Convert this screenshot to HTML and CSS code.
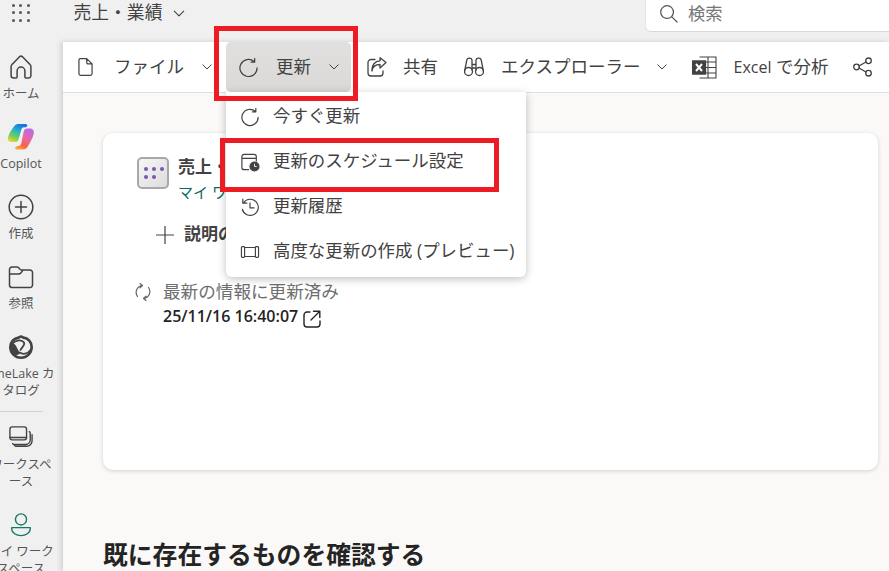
FILE: index.html
```html
<!DOCTYPE html>
<html lang="ja">
<head>
<meta charset="utf-8">
<title>売上・業績</title>
<link rel="stylesheet" href="styles.css">
</head>
<body>
<div class="app">
  <header class="topbar">
    <div class="waffle">
      <i></i><i></i><i></i><i></i><i></i><i></i><i></i><i></i><i></i>
    </div>
    <div class="crumb">売上・業績</div>
    <svg class="chev-top" viewBox="0 0 14 8"><path d="M1.500 1.200 7 6.700l5.500-5.500"/></svg>
    <div class="search">
      <svg class="search-icon" viewBox="0 0 20 20"><circle cx="8.500" cy="8.500" r="6.700"/><path d="m13.500 13.500 5.500 5.500"/></svg>
      <span>検索</span>
    </div>
  </header>

  <nav class="sidebar">
    <div class="nav-list">
      <div class="nav-item">
        <svg class="ic" viewBox="0 0 24 24"><path d="M3 9.500 10.500 1.800a2.200 2.200 0 0 1 3 0L21 9.500a2.800 2.800 0 0 1 .9 2v9a2.500 2.500 0 0 1-2.500 2.500h-2.500a1 1 0 0 1-1-1v-6a3.900 3.900 0 0 0-7.800 0v6a1 1 0 0 1-1 1H4.600a2.500 2.500 0 0 1-2.500-2.500v-9a2.800 2.800 0 0 1 .9-2Z"/></svg>
        <span>ホーム</span>
      </div>
      <div class="nav-item">
        <svg class="ic copilot" viewBox="0 0 28 28">
          <defs>
            <linearGradient id="cpa" x1="0.700" y1="0" x2="0.200" y2="1"><stop offset="0" stop-color="#1b6fe0"/><stop offset="0.400" stop-color="#25b5c9"/><stop offset="0.750" stop-color="#7fd14a"/><stop offset="1" stop-color="#f2d33a"/></linearGradient>
            <linearGradient id="cpb" x1="0.800" y1="0" x2="0.300" y2="1"><stop offset="0" stop-color="#b66bea"/><stop offset="0.450" stop-color="#e867a8"/><stop offset="0.800" stop-color="#f6653f"/><stop offset="1" stop-color="#f8a03a"/></linearGradient>
          </defs>
          <path fill="url(#cpa)" d="M11 1h7.500c1.500 0 2.200 1 1.600 2.400L18 4.500c-2-.5-3.200.5-3.700 2.200l-2.600 9c-.5 2-1.500 3.300-3 3.300H4.500C1.500 19 .5 16.800 1 14.500 2 10 4.500 7 7 3.500 8 2 9.200 1 11 1Z"/>
          <path fill="url(#cpb)" d="M20 5.500h3c3 0 4.300 2.500 3.800 5-1 4.500-3 8-5.800 12.500-1.200 2-2.500 3.500-5 3.500H10c-1.500 0-2.200-1.200-1.500-2.500L10.500 23c1.800.3 3.200-.5 3.800-2.400l2.200-11.100C17 7 18 5.500 20 5.500Z"/>
        </svg>
        <span>Copilot</span>
      </div>
      <div class="nav-item">
        <svg class="ic" viewBox="0 0 24 24"><circle cx="12" cy="12" r="11.800"/><path d="M12 6.500v11M6.500 12h11"/></svg>
        <span>作成</span>
      </div>
      <div class="nav-item">
        <svg class="ic" viewBox="0 0 24 24"><path d="M.5 4.500A2.500 2.500 0 0 1 3 2h5a2 2 0 0 1 1.400.6l1.800 1.900c.4.400.9.600 1.400.6H21a2.500 2.500 0 0 1 2.500 2.500V20a2.500 2.500 0 0 1-2.500 2.500H3A2.500 2.500 0 0 1 .5 20ZM.5 9h9.500c.8 0 1.300-.3 1.800-.9l2.200-3"/></svg>
        <span>参照</span>
      </div>
      <div class="nav-item">
        <svg class="ic lake" viewBox="0 0 24 24">
          <path class="lake-ring" d="M12 1.500c1 0 1.600.8 2.400 1.100C19 3 22.700 7 22.700 12A10.700 10.700 0 1 1 1.300 12C1.300 7 5 3.300 9.600 2.600c.8-.3 1.400-1.100 2.400-1.100Z"/>
          <path class="lake-solid" d="M1.500 9c3-1.200 4.500 0 5.500 2l4 7.500c-3 2.500-7 2.500-9-1C.5 15 .5 11.500 1.500 9Z"/>
          <path class="lake-curve" d="M3 9c4-4.500 10-4.500 12-1.500 1.500 2.500-2.500 5-3.500 7.500M10.500 17.500c3 2 8 2 11-2.500"/>
        </svg>
        <span>OneLake カタログ</span>
      </div>
      <div class="nav-rule"></div>
      <div class="nav-item">
        <svg class="ic" viewBox="0 0 26 26"><rect x="1" y="1" width="18" height="14" rx="2.500"/><path d="M1 12.500h18M22 6a2 2 0 0 1 1 2v7a5 5 0 0 1-5 5H6a2 2 0 0 1-2-1M25 9.500v6.500a6 6 0 0 1-6 6H8a2 2 0 0 1-2-1"/></svg>
        <span>ワークスペース</span>
      </div>
      <div class="nav-item">
        <svg class="ic teal" viewBox="0 0 24 26"><circle cx="12" cy="7" r="6"/><path d="M2 15.800h20v1.700c0 4-5 7-10 7s-10-3-10-7Z"/></svg>
        <span>マイ ワークスペース</span>
      </div>
    </div>
  </nav>

  <main class="main">
    <div class="toolbar">
      <div class="tb-item tb-file">
        <svg class="tb-ic doc" viewBox="0 0 16 20"><path d="M2.500 1h6.800L15 6.700V17a2 2 0 0 1-2 2H3a2 2 0 0 1-2-2V2.500A1.500 1.500 0 0 1 2.500 1ZM9.300 1v4.200a1.500 1.500 0 0 0 1.500 1.500H15"/></svg>
        <span>ファイル</span>
        <svg class="chev" viewBox="0 0 10 6"><path d="m.8.800 4.200 4.200L9.200.8"/></svg>
      </div>
      <div class="tb-item tb-refresh">
        <svg class="tb-ic refresh" viewBox="0 0 20 20"><path d="M19 10.500A9 9 0 1 1 15.800 3.600M16.500.5v3.800h-3.800"/></svg>
        <span>更新</span>
        <svg class="chev" viewBox="0 0 10 6"><path d="m.8.800 4.200 4.200L9.200.8"/></svg>
      </div>
      <div class="tb-item tb-share">
        <svg class="tb-ic share" viewBox="0 0 20 20"><path d="M8 2.500H4a3 3 0 0 0-3 3V16a3 3 0 0 0 3 3h9a3 3 0 0 0 3-3v-2M5 14c.5-4 3.500-6.500 8-6.500V11l6-5.500L13 .8v3C8 4 4.500 8 5 14Z"/></svg>
        <span>共有</span>
      </div>
      <div class="tb-item tb-explore">
        <svg class="tb-ic binoc" viewBox="0 0 20 20"><circle cx="4.500" cy="14.500" r="4"/><circle cx="15.500" cy="14.500" r="4"/><path d="M.5 14.500 2.800 3C3.300.5 7.500.5 8 3v10M19.500 14.500 17.200 3C16.700.5 12.500.5 12 3v10M8 7.500h4M8 11h4"/></svg>
        <span>エクスプローラー</span>
        <svg class="chev" viewBox="0 0 10 6"><path d="m.8.800 4.200 4.200L9.200.8"/></svg>
      </div>
      <div class="tb-item tb-excel">
        <svg class="tb-ic excel" viewBox="0 0 25 23">
          <path class="xl-grid" d="M8 1h16v21H8M16 1v21M8 6h16M8 11.500h16M8 17h16"/>
          <rect class="xl-box" x="0.500" y="5" width="13" height="13"/>
          <path class="xl-x" d="m4 8 6 7M10 8l-6 7"/>
        </svg>
        <span><span class="latin">Excel</span> で分析</span>
      </div>
      <div class="tb-item tb-nodes">
        <svg class="tb-ic nodes" viewBox="0 0 20 20"><circle cx="3.500" cy="10" r="2.800"/><circle cx="15.500" cy="3.800" r="2.800"/><circle cx="15.500" cy="16.200" r="2.800"/><path d="M6 9 13 5M6 11l7 4"/></svg>
      </div>
    </div>

    <div class="content">
      <section class="card">
        <div class="card-head">
          <div class="tile"><i></i><i></i><i></i><i></i><i></i></div>
          <div class="card-title">
            <div class="name">売上・業績</div>
            <div class="where">マイ ワークスペース</div>
          </div>
        </div>
        <div class="add-desc">
          <svg class="plus" viewBox="0 0 18 18"><path d="M9 0v18M0 9h18"/></svg>
          <span>説明の追加</span>
        </div>
        <div class="status">
          <svg class="sync" viewBox="0 0 16 18"><path d="M2.500 13.500A7 7 0 0 1 7 2.500M5 .5l2.500 2L5 4.800M13.500 4.500A7 7 0 0 1 9 15.500M11 13.200l-2.500 2.300L11 17.500"/></svg>
          <div>
            <div class="status-label">最新の情報に更新済み</div>
            <div class="status-time">25/11/16 16:40:07
              <svg class="ext" viewBox="0 0 18 18"><path d="M7 2H4a3 3 0 0 0-3 3v9a3 3 0 0 0 3 3h10a3 3 0 0 0 3-3v-3M10.500 1.200h6.300v6.300M16.500 1.500 8 10"/></svg>
            </div>
          </div>
        </div>
      </section>
      <h2 class="section-title">既に存在するものを確認する</h2>
    </div>
  </main>

  <div class="menu">
    <div class="menu-item">
      <svg class="m-ic" viewBox="0 0 20 20"><path d="M19 10.500A9 9 0 1 1 15.800 3.600M16.500.5v3.800h-3.800"/></svg>
      <span>今すぐ更新</span>
    </div>
    <div class="menu-item">
      <svg class="m-ic" viewBox="0 0 20 20"><path d="M8.500 18.500H3.500a2.500 2.500 0 0 1-2.500-2.500V4a2.500 2.500 0 0 1 2.500-2.500h11A2.500 2.500 0 0 1 17 4v5M1 6h16"/><circle class="m-solid" cx="15" cy="15" r="5"/><path class="m-hand" d="M15 12.500V15h2"/></svg>
      <span>更新のスケジュール設定</span>
    </div>
    <div class="menu-item">
      <svg class="m-ic" viewBox="0 0 20 20"><path d="M1.500 12.500A9 9 0 1 0 3 5M2 1.200v4.500h4.500M10 5.500V11h4.500"/></svg>
      <span>更新履歴</span>
    </div>
    <div class="menu-item">
      <svg class="m-ic wide" viewBox="0 0 20 20"><path d="M4 5h12M4 15h12M4 5v10a1 1 0 0 1-1 1H1.500a1 1 0 0 1-1-1V5a1 1 0 0 1 1-1H3a1 1 0 0 1 1 1ZM16 5v10a1 1 0 0 0 1 1h1.500a1 1 0 0 0 1-1V5a1 1 0 0 0-1-1H17a1 1 0 0 0-1 1Z"/></svg>
      <span>高度な更新の作成 (プレビュー)</span>
    </div>
  </div>

  <div class="mark mark-button"></div>
  <div class="mark mark-item"></div>
</div>
</body>
</html>
```

FILE: styles.css
```css
* { box-sizing: border-box; }

html, body {
  margin: 0;
  height: 100%;
  overflow: hidden;
}

body {
  font-family: "Open Sans", "Noto Sans CJK JP", sans-serif;
  color: #424242;
  background: #f0f0f0;
}

svg {
  display: block;
  flex: none;
  fill: none;
  stroke: #424242;
  stroke-width: 1.300;
  stroke-linecap: round;
  stroke-linejoin: round;
}

.app {
  position: relative;
  display: grid;
  grid-template-columns: 63px 1fr;
  grid-template-rows: 42px 1fr;
  width: 889px;
  height: 571px;
  overflow: hidden;
}

/* top bar */
.topbar {
  grid-column: 1 / 3;
  display: flex;
  align-items: flex-start;
  background: #f0f0f0;
}

.waffle {
  display: grid;
  grid-template-columns: repeat(3, 3px);
  grid-auto-rows: 3px;
  gap: 4.500px;
  margin: 3.500px 0 0 11.500px;
}

.waffle i {
  background: #555;
  border-radius: 50%;
}

.crumb {
  margin-left: 44px;
  font-size: 17.800px;
  line-height: 24px;
}

.chev-top {
  width: 12px;
  height: 7px;
  margin: 10px 0 0 11px;
}

.search {
  display: flex;
  align-items: center;
  width: 243px;
  height: 32px;
  margin-left: auto;
  padding: 0 0 6px 13px;
  background: #fff;
  border-bottom: 1px solid #d8d8d8;
  border-radius: 0 0 0 5px;
  box-shadow: -1px 0 0 #e6e6e6;
  color: #777;
  font-size: 17.300px;
}

.search-icon {
  width: 19px;
  height: 19px;
  margin: 2px 10px 0 0;
  stroke: #555;
}

/* sidebar */
.sidebar {
  overflow: hidden;
  background: #f0f0f0;
}

.nav-list {
  width: 68px;
  margin: 13px 0 0 -13px;
}

.nav-item {
  display: flex;
  flex-direction: column;
  align-items: center;
  margin-bottom: 23px;
  font-size: 12.500px;
  line-height: 17px;
  text-align: center;
  color: #555;
}

.ic {
  width: 24px;
  height: 24px;
  margin-bottom: 6px;
  stroke-width: 1.500;
  overflow: visible;
}

.copilot {
  width: 28px;
  height: 28px;
  margin: -2px 0 4px;
  stroke: none;
}

.lake-ring {
  stroke-width: 2.600;
}

.lake-solid {
  fill: #424242;
  stroke: none;
}

.lake-curve {
  stroke-width: 1.800;
}

.teal {
  stroke: #117865;
}

.nav-rule {
  width: 43px;
  height: 1px;
  margin: -11px 0 14px 13px;
  background: #d4d4d4;
}

/* main */
.main {
  position: relative;
  display: flex;
  flex-direction: column;
  min-width: 0;
  background: #faf9f8;
  box-shadow: -2px 0 5px rgba(0, 0, 0, 0.14);
}

.toolbar {
  display: flex;
  align-items: center;
  flex: none;
  height: 51px;
  background: #fff;
  border-bottom: 1px solid #e0e0e0;
  font-size: 17.500px;
}

.tb-item {
  display: flex;
  align-items: center;
  height: 50px;
  white-space: nowrap;
}

.tb-item > span {
  padding-bottom: 4px;
}

.latin {
  font-size: 16px;
}

.tb-ic {
  width: 20px;
  height: 20px;
}

.chev {
  width: 10px;
  height: 6px;
  stroke-width: 1;
}

.tb-file {
  width: 163px;
  padding-left: 15px;
}

.doc {
  width: 15px;
  margin-right: 21px;
}

.tb-file .chev {
  margin-left: 18px;
}

.tb-refresh {
  width: 125px;
  padding-left: 13px;
  background: linear-gradient(#e2e0de, #dbd9d7);
  border-radius: 5px;
}

.refresh {
  width: 19px;
  height: 19px;
  margin-right: 18px;
}

.tb-refresh .chev {
  margin-left: 18px;
}

.tb-share {
  margin-left: 16px;
}

.share {
  margin-right: 16px;
}

.tb-explore {
  margin-left: 26px;
}

.binoc {
  margin-right: 17px;
}

.tb-explore .chev {
  margin-left: 17px;
}

.tb-excel {
  margin-left: 25px;
}

.excel {
  width: 25px;
  height: 23px;
  margin-right: 16px;
}

.xl-grid {
  stroke-width: 1.100;
}

.xl-box {
  fill: #424242;
  stroke: #424242;
}

.xl-x {
  stroke: #fff;
  stroke-width: 2;
  stroke-linecap: butt;
}

.tb-nodes {
  margin-left: 25px;
}

.nodes {
  width: 20px;
  height: 20px;
}

/* content */
.content {
  flex: 1;
  padding: 40px 11px 0 40px;
}

.card {
  height: 337px;
  padding: 24px 34px;
  background: #fff;
  border-radius: 10px;
  box-shadow: 0 1px 4px rgba(0, 0, 0, 0.16);
}

.card-head {
  display: flex;
}

.tile {
  display: grid;
  grid-template-columns: repeat(3, 4px);
  grid-auto-rows: 4px;
  gap: 4px;
  align-content: center;
  width: 32px;
  height: 32px;
  padding-left: 5px;
  background: linear-gradient(135deg, #f6f6f6, #dcdcdc);
  border: 2px solid #a8a8a8;
  border-radius: 5px;
}

.tile i {
  background: #7a55b5;
  border-radius: 50%;
}

.card-title {
  margin-left: 9px;
  white-space: nowrap;
}

.name {
  font-size: 17px;
  line-height: 20px;
  font-weight: 700;
}

.where {
  margin-top: 5px;
  font-size: 15px;
  line-height: 20px;
  color: #0b6a5f;
}

.add-desc {
  display: flex;
  align-items: center;
  margin: 21px 0 0 19px;
  font-size: 17px;
  line-height: 22px;
  font-weight: 700;
  white-space: nowrap;
}

.add-desc span {
  padding-bottom: 2px;
}

.plus {
  width: 18px;
  height: 18px;
  margin-right: 10px;
  stroke-width: 1.200;
}

.status {
  display: flex;
  margin: 33px 0 0 -2px;
}

.sync {
  width: 16px;
  height: 18px;
  margin: 3px 12px 0 0;
  stroke: #666;
  stroke-width: 1.200;
}

.status-label {
  font-size: 17.600px;
  line-height: 23px;
  color: #6e6e6e;
}

.status-time {
  display: flex;
  align-items: center;
  font-size: 16px;
  line-height: 26px;
  font-weight: 600;
  color: #242424;
}

.ext {
  width: 18px;
  height: 18px;
  margin: 5px 0 0 5px;
  stroke: #242424;
  stroke-width: 1.400;
}

.section-title {
  margin: 67px 0 0;
  font-size: 24.800px;
  line-height: 34px;
  font-weight: 700;
  color: #242424;
  white-space: nowrap;
}

/* overlay menu */
.menu {
  position: absolute;
  left: 226px;
  top: 92px;
  width: 300px;
  height: 185px;
  padding-top: 2px;
  background: #fff;
  border-radius: 0 0 6px 6px;
  box-shadow: 0 2px 8px rgba(0, 0, 0, 0.25);
}

.menu-item {
  display: flex;
  align-items: center;
  height: 45px;
  padding-left: 15px;
  font-size: 17.450px;
  white-space: nowrap;
}

.menu-item span {
  padding-bottom: 4px;
}

.m-ic {
  width: 18px;
  height: 18px;
  margin-right: 14px;
  overflow: visible;
}

.wide {
  width: 20px;
  margin: 0 13px 0 -1px;
}

.m-solid {
  fill: #424242;
}

.m-hand {
  stroke: #fff;
  stroke-width: 1;
}

.mark {
  position: absolute;
  border: 5px solid #ed1c24;
}

.mark-button {
  left: 214px;
  top: 26px;
  width: 144px;
  height: 75px;
}

.mark-item {
  left: 220px;
  top: 138px;
  width: 279px;
  height: 54px;
}
```
